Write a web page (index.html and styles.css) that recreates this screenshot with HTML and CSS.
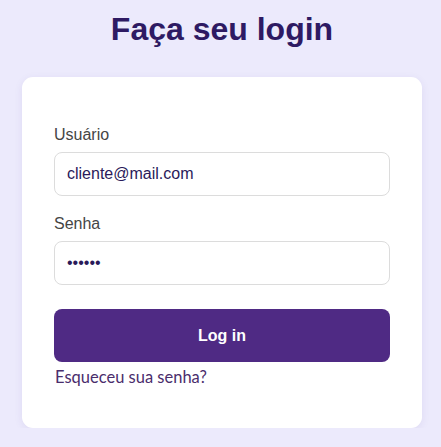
FILE: index.html
```html
<!DOCTYPE html>
<html lang="pt-BR">
<head>
<meta charset="utf-8">
<title>Login</title>
<link rel="stylesheet" href="styles.css">
</head>
<body>
<main class="page">
  <h1 class="title">Faça seu login</h1>
  <form class="card">
    <label class="label" for="user">Usuário</label>
    <input class="field" id="user" type="text" value="cliente@mail.com">
    <label class="label label-second" for="pass">Senha</label>
    <input class="field" id="pass" type="password" value="123456">
    <button class="btn" type="button">Log in</button>
    <a class="link" href="#">Esqueceu sua senha?</a>
  </form>
</main>
</body>
</html>
```

FILE: styles.css
```css
* { box-sizing: border-box; }
html, body {
  margin: 0;
  padding: 0;
  background: #eceafc;
}
body {
  font-family: "Liberation Sans", Arial, sans-serif;
}
.page {
  display: flex;
  flex-direction: column;
  align-items: center;
  padding: 11px 19px 0 22px;
}
.title {
  margin: 0;
  font-size: 32px;
  font-weight: 700;
  line-height: 37px;
  color: #2e1a63;
}
.card {
  margin-top: 29px;
  width: 400px;
  background: #fff;
  border-radius: 11px;
  box-shadow: 0 2px 8px rgba(60, 40, 140, 0.08);
  padding: 49px 32px 41px;
  display: flex;
  flex-direction: column;
}
.label {
  font-size: 16px;
  line-height: 18px;
  color: #454545;
  margin-bottom: 8px;
}
.label-second {
  margin-top: 19px;
}
.field {
  height: 44px;
  width: 100%;
  border: 1px solid #dcdcdc;
  border-radius: 8px;
  padding: 0 12px;
  font-family: "Liberation Sans", Arial, sans-serif;
  font-size: 16px;
  color: #2a1a5a;
  background: #fff;
  outline: none;
}
.btn {
  margin-top: 24px;
  height: 53px;
  width: 100%;
  border: none;
  border-radius: 8px;
  background: #4f2a84;
  color: #fff;
  font-family: "Liberation Sans", Arial, sans-serif;
  font-size: 16px;
  font-weight: 700;
}
.link {
  margin-top: 5px;
  font-family: "Lato", "Noto Sans", sans-serif;
  font-size: 16.5px;
  line-height: 20px;
  color: #4a2d6c;
  text-decoration: none;
  padding-left: 1px;
}
```
